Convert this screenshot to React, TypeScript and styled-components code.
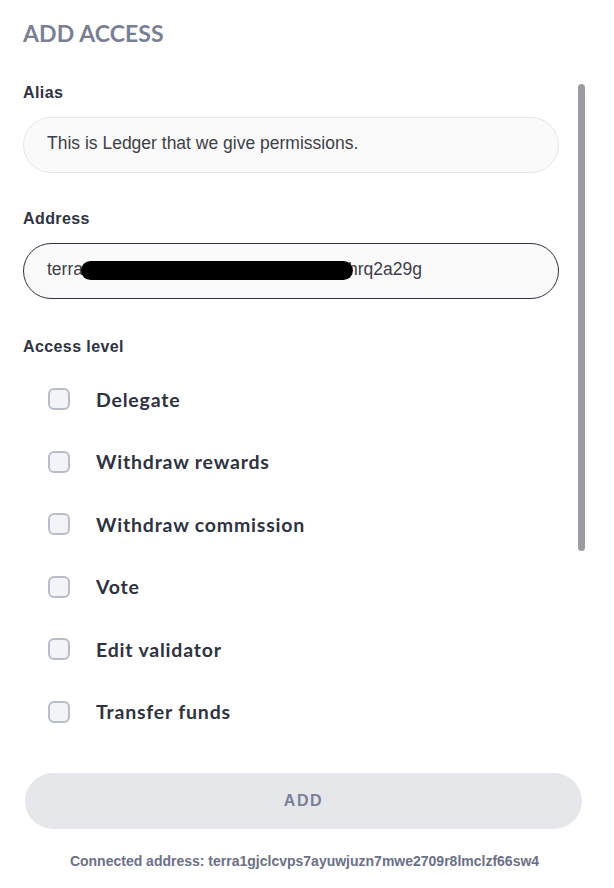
import React from "react";
import styled, { createGlobalStyle } from "styled-components";

const Global = createGlobalStyle`
  html, body { margin: 0; padding: 0; background: #ffffff; }
  body { font-family: "Liberation Sans", Arial, sans-serif; }
  * { box-sizing: border-box; }
`;

const Page = styled.div`
  position: relative;
  width: 614px;
  height: 888px;
  padding: 0 56px 0 23px;
  overflow: hidden;
`;

const Title = styled.h1`
  margin: 0;
  padding-top: 19px;
  font-family: "Lato", "Liberation Sans", sans-serif;
  font-weight: 700;
  font-size: 23px;
  line-height: 28px;
  color: #7a8093;
  letter-spacing: 0.1px;
`;

const Label = styled.div<{ $top: number }>`
  margin-top: ${(p) => p.$top}px;
  font-family: "Liberation Sans", Arial, sans-serif;
  font-weight: 700;
  font-size: 16px;
  line-height: 18px;
  color: #2f3240;
  letter-spacing: 0.4px;
`;

const Field = styled.div<{ $active?: boolean }>`
  margin-top: 15px;
  width: 536px;
  height: 56px;
  border-radius: 28px;
  background: #fafafa;
  border: 1px solid ${(p) => (p.$active ? "#2f3240" : "#e6e6e9")};
  display: flex;
  align-items: center;
  padding: 0 0 3px 23px;
  font-family: "Liberation Sans", Arial, sans-serif;
  font-size: 17.5px;
  color: #3d3f47;
`;

const Redact = styled.span`
  display: inline-block;
  width: 272px;
  height: 19px;
  margin: 0 -5px 0 -2px;
  background: #000;
  border-radius: 10px;
  position: relative;
  top: 1px;
`;

const Options = styled.div`
  margin-top: 32px;
  padding-left: 25px;
  display: flex;
  flex-direction: column;
  gap: 40.5px;
`;

const Option = styled.label`
  display: flex;
  align-items: center;
  gap: 26px;
  height: 22px;
  font-family: "Lato", "Liberation Sans", sans-serif;
  font-weight: 700;
  font-size: 19.5px;
  color: #2f3240;
  letter-spacing: 0.8px;
`;

const Box = styled.span`
  width: 22px;
  height: 22px;
  border: 2px solid #b9bccb;
  background: #f3f4f7;
  border-radius: 6px;
  flex: none;
`;

const Button = styled.button`
  display: block;
  margin: 50px 0 0 2px;
  width: 557px;
  height: 56px;
  border: none;
  border-radius: 28px;
  background: #e6e7eb;
  color: #7b8094;
  font-family: "Liberation Sans", Arial, sans-serif;
  font-weight: 700;
  font-size: 16px;
  letter-spacing: 1.6px;
`;

const Footer = styled.div`
  margin-top: 24px;
  width: 563px;
  text-align: center;
  font-family: "Liberation Sans", Arial, sans-serif;
  font-weight: 700;
  font-size: 14px;
  color: #6b7085;
`;

const ScrollThumb = styled.div`
  position: absolute;
  left: 578px;
  top: 84px;
  width: 7px;
  height: 467px;
  border-radius: 4px;
  background: #9b9ca2;
`;

const options = [
  "Delegate",
  "Withdraw rewards",
  "Withdraw commission",
  "Vote",
  "Edit validator",
  "Transfer funds",
];

export default function App() {
  return (
    <>
      <Global />
      <Page>
        <Title>ADD ACCESS</Title>
        <Label $top={37}>Alias</Label>
        <Field>This is Ledger that we give permissions.</Field>
        <Label $top={37}>Address</Label>
        <Field $active>
          terra
          <Redact />
          hrq2a29g
        </Field>
        <Label $top={39}>Access level</Label>
        <Options>
          {options.map((o) => (
            <Option key={o}>
              <Box />
              {o}
            </Option>
          ))}
        </Options>
        <Button>ADD</Button>
        <Footer>Connected address: terra1gjclcvps7ayuwjuzn7mwe2709r8lmclzf66sw4</Footer>
        <ScrollThumb />
      </Page>
    </>
  );
}
